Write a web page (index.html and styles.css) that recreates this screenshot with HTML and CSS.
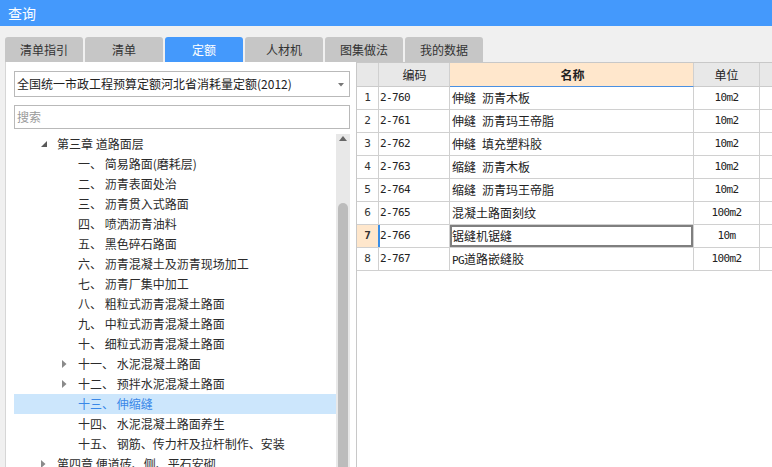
FILE: index.html
```html
<!DOCTYPE html>
<html lang="zh-CN">
<head>
<meta charset="utf-8">
<title>查询</title>
<link rel="stylesheet" href="styles.css">
</head>
<body>
<div class="titlebar">查询</div>
<div class="tabs">
  <div class="tab">清单指引</div>
  <div class="tab">清单</div>
  <div class="tab active">定额</div>
  <div class="tab">人材机</div>
  <div class="tab">图集做法</div>
  <div class="tab">我的数据</div>
</div>
<div class="main">
  <div class="left">
    <div class="select">
      <span class="select-text">全国统一市政工程预算定额河北省消耗量定额(2012)</span>
      <svg class="caret" width="6" height="4" viewBox="0 0 6 4"><polygon points="0,0 6,0 3,3.5" fill="#777"/></svg>
    </div>
    <div class="search">搜索</div>
    <div class="treewrap">
      <div class="tree">
        <div class="node l1"><span class="tw"><svg width="6" height="6" viewBox="0 0 6 6"><polygon points="6,0 6,6 0,6" fill="#595959"/></svg></span><span>第三章 道路面层</span></div>
        <div class="node l2"><span class="tw"></span><span>一、 简易路面(磨耗层)</span></div>
        <div class="node l2"><span class="tw"></span><span>二、 沥青表面处治</span></div>
        <div class="node l2"><span class="tw"></span><span>三、 沥青贯入式路面</span></div>
        <div class="node l2"><span class="tw"></span><span>四、 喷洒沥青油料</span></div>
        <div class="node l2"><span class="tw"></span><span>五、 黑色碎石路面</span></div>
        <div class="node l2"><span class="tw"></span><span>六、 沥青混凝土及沥青现场加工</span></div>
        <div class="node l2"><span class="tw"></span><span>七、 沥青厂集中加工</span></div>
        <div class="node l2"><span class="tw"></span><span>八、 粗粒式沥青混凝土路面</span></div>
        <div class="node l2"><span class="tw"></span><span>九、 中粒式沥青混凝土路面</span></div>
        <div class="node l2"><span class="tw"></span><span>十、 细粒式沥青混凝土路面</span></div>
        <div class="node l2"><span class="tw"><svg width="5" height="8" viewBox="0 0 5 8"><polygon points="0,0 4.5,4 0,8" fill="#8a8a8a"/></svg></span><span>十一、 水泥混凝土路面</span></div>
        <div class="node l2"><span class="tw"><svg width="5" height="8" viewBox="0 0 5 8"><polygon points="0,0 4.5,4 0,8" fill="#8a8a8a"/></svg></span><span>十二、 预拌水泥混凝土路面</span></div>
        <div class="node l2 selected"><span class="tw"></span><span>十三、 伸缩缝</span></div>
        <div class="node l2"><span class="tw"></span><span>十四、 水泥混凝土路面养生</span></div>
        <div class="node l2"><span class="tw"></span><span>十五、 钢筋、传力杆及拉杆制作、安装</span></div>
        <div class="node l1"><span class="tw"><svg width="5" height="8" viewBox="0 0 5 8"><polygon points="0,0 4.5,4 0,8" fill="#8a8a8a"/></svg></span><span>第四章 便道砖、侧、平石安砌</span></div>
      </div>
      <div class="scroll">
        <svg class="up" width="8" height="5" viewBox="0 0 8 5"><polygon points="0,5 4,0 8,5" fill="#666"/></svg>
        <div class="thumb"></div>
      </div>
    </div>
  </div>
  <div class="grid">
    <div class="row head">
      <div class="c num"></div>
      <div class="c code">编码</div>
      <div class="c name hl">名称</div>
      <div class="c unit">单位</div>
      <div class="c extra"></div>
    </div>
    <div class="row"><div class="c num">1</div><div class="c code">2-760</div><div class="c name">伸缝&ensp;沥青木板</div><div class="c unit">10m2</div><div class="c extra"></div></div>
    <div class="row"><div class="c num">2</div><div class="c code">2-761</div><div class="c name">伸缝&ensp;沥青玛王帝脂</div><div class="c unit">10m2</div><div class="c extra"></div></div>
    <div class="row"><div class="c num">3</div><div class="c code">2-762</div><div class="c name">伸缝&ensp;填充塑料胶</div><div class="c unit">10m2</div><div class="c extra"></div></div>
    <div class="row"><div class="c num">4</div><div class="c code">2-763</div><div class="c name">缩缝&ensp;沥青木板</div><div class="c unit">10m2</div><div class="c extra"></div></div>
    <div class="row"><div class="c num">5</div><div class="c code">2-764</div><div class="c name">缩缝&ensp;沥青玛王帝脂</div><div class="c unit">10m2</div><div class="c extra"></div></div>
    <div class="row"><div class="c num">6</div><div class="c code">2-765</div><div class="c name">混凝土路面刻纹</div><div class="c unit">100m2</div><div class="c extra"></div></div>
    <div class="row current"><div class="c num">7</div><div class="c code">2-766</div><div class="c name focus">锯缝机锯缝</div><div class="c unit">10m</div><div class="c extra"></div></div>
    <div class="row"><div class="c num">8</div><div class="c code">2-767</div><div class="c name"><span class="lat">PG</span>道路嵌缝胶</div><div class="c unit">100m2</div><div class="c extra"></div></div>
  </div>
</div>
</body>
</html>
```
FILE: styles.css
```css
* { box-sizing: border-box; }
html, body { margin: 0; padding: 0; }
body {
  width: 772px;
  height: 467px;
  overflow: hidden;
  background: #f0f0f0;
  font-family: "Noto Sans CJK SC", "Microsoft YaHei", sans-serif;
  font-size: 12px;
  color: #333;
}
.titlebar {
  height: 26px;
  background: #4499fc;
  color: #fff;
  font-size: 14px;
  line-height: 26px;
  padding-left: 8px;
}
.tabs {
  display: flex;
  gap: 2px;
  padding: 11px 0 0 5px;
  height: 36px;
}
.tab {
  width: 78px;
  height: 25px;
  background: #c6c6c6;
  border-radius: 3px 3px 0 0;
  text-align: center;
  line-height: 25px;
  font-size: 12px;
  color: #333;
}
.tab.active { background: #4499fc; color: #fff; }
.main {
  display: flex;
  height: 405px;
  margin-left: 5px;
}
.left {
  width: 351px;
  background: #fff;
  border-left: 1px solid #d6d6d6;
  padding: 9px 0 0 8px;
  display: flex;
  flex-direction: column;
}
.select {
  width: 336px;
  height: 26px;
  border: 1px solid #b9b9b9;
  display: flex;
  align-items: center;
  justify-content: space-between;
  padding: 0 5px 0 2px;
  color: #222;
  line-height: 24px;
}
.caret { margin-top: 1px; }
.search {
  width: 336px;
  height: 24px;
  margin-top: 8px;
  border: 1px solid #b9b9b9;
  padding-left: 2px;
  line-height: 22px;
  color: #9a9a9a;
}
.treewrap {
  margin-top: 5px;
  flex: 1;
  display: flex;
  overflow: hidden;
}
.tree { width: 322px; }
.node {
  height: 20px;
  line-height: 20px;
  display: flex;
  align-items: center;
  white-space: nowrap;
  color: #2b2b2b;
}
.node.l1 { padding-left: 24px; }
.node.l2 { padding-left: 45px; }
.tw {
  width: 19px;
  height: 20px;
  display: flex;
  align-items: center;
  padding-left: 3px;
  flex-shrink: 0;
}
.node.l1 .tw svg { margin-top: 0; }
.node.selected { background: #cce6fc; color: #3a88e8; }
.scroll {
  width: 14px;
  background: #e8e8e8;
  display: flex;
  flex-direction: column;
  align-items: center;
}
.up { margin-top: 2px; flex-shrink: 0; }
.thumb {
  width: 10px;
  flex: 1;
  margin-top: 62px;
  background: #bcbcbc;
  border-radius: 5px 5px 0 0;
}
.grid {
  flex: 1;
  background: #fff;
  border-left: 1px solid #c8c8c8;
  border-top: 1px solid #c8c8c8;
}
.row {
  display: flex;
  height: 23px;
  border-bottom: 1px solid #d0d0d0;
}
.row.head {
  height: 24px;
  background: #e8e8e8;
  border-bottom: none;
}
.c {
  border-right: 1px solid #d0d0d0;
  height: 100%;
  line-height: 22px;
  white-space: nowrap;
  overflow: hidden;
}
.head .c {
  border-bottom: 1px solid #cbcbcb;
  line-height: 23px;
  text-align: center;
  color: #222;
  font-size: 12px;
}
.head .c.hl {
  background: #ffe7cc;
  border-bottom-color: #4a90e2;
  font-weight: bold;
}
.num {
  width: 22px;
  text-align: center;
  font-family: "DejaVu Sans Mono", monospace;
  font-size: 11px;
  color: #333;
}
.code {
  width: 71px;
  padding-left: 1px;
  font-family: "DejaVu Sans Mono", monospace;
  font-size: 11px;
  letter-spacing: -0.6px;
  color: #222;
}
.name {
  width: 244px;
  padding-left: 2px;
  color: #222;
}
.lat {
  font-family: "DejaVu Sans Mono", monospace;
  font-size: 11px;
  letter-spacing: -0.6px;
}
.unit {
  width: 66px;
  text-align: center;
  font-family: "DejaVu Sans Mono", monospace;
  font-size: 11px;
  letter-spacing: -0.6px;
  color: #222;
}
.head .unit, .head .code { font-family: "Noto Sans CJK SC", sans-serif; letter-spacing: 0; font-size: 12px; }
.extra { flex: 1; border-right: none; }
.row.current .num {
  background: #ffe7cc;
  font-weight: bold;
  border-right-color: #3a8ee6;
}
.row.current .code { box-shadow: inset 1px 0 #3a8ee6; }
.name.focus { box-shadow: inset 0 0 0 2px #7f7f7f; }
```
